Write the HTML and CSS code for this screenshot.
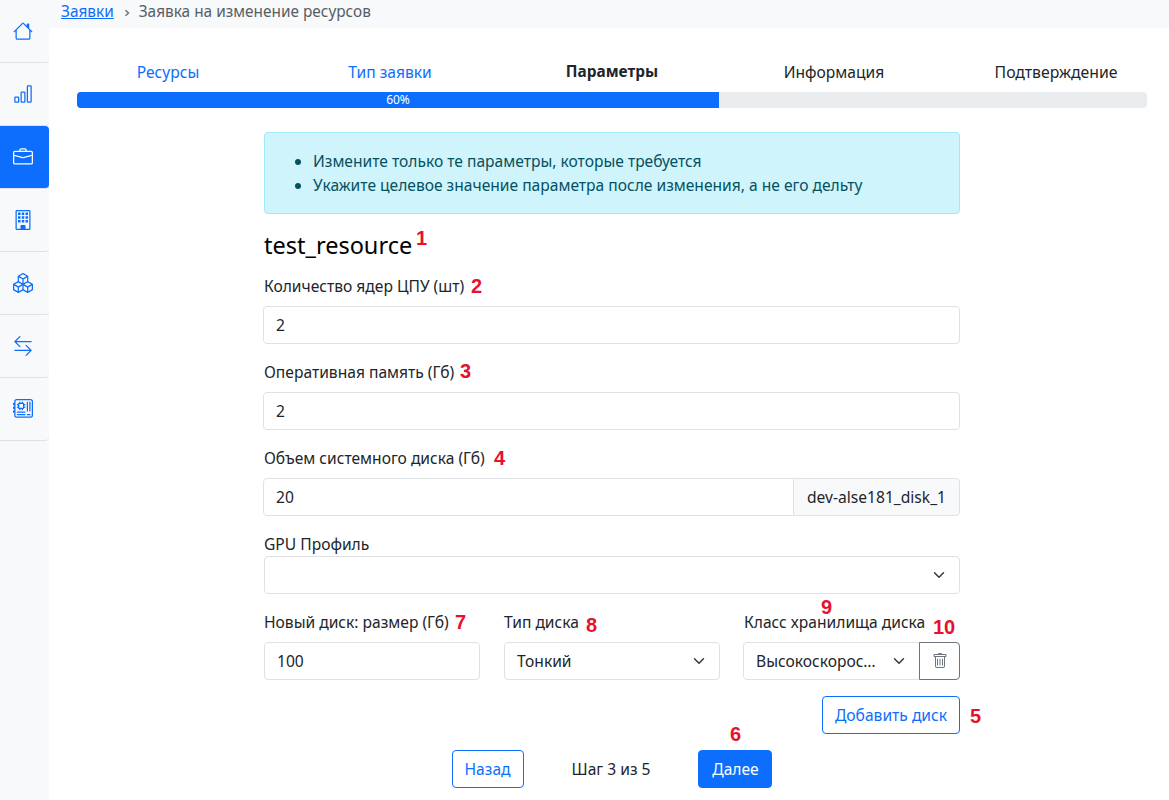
FILE: index.html
```html
<!DOCTYPE html>
<html lang="ru">
<head>
<meta charset="utf-8">
<title>Заявка на изменение ресурсов</title>
<link rel="stylesheet" href="styles.css">
</head>
<body>
<div class="app">
  <nav class="sidebar">
    <a class="nav-item"><svg class="icon" viewBox="0 0 16 16"><path d="M8.707 1.5a1 1 0 0 0-1.414 0L.646 8.146a.5.5 0 0 0 .708.708L2 8.207V13.5A1.5 1.5 0 0 0 3.5 15h9a1.5 1.5 0 0 0 1.5-1.5V8.207l.646.647a.5.5 0 0 0 .708-.708L13 5.793V2.5a.5.5 0 0 0-.5-.5h-1a.5.5 0 0 0-.5.5v1.293zM13 7.207V13.5a.5.5 0 0 1-.5.5h-9a.5.5 0 0 1-.5-.5V7.207l5-5z"/></svg></a>
    <a class="nav-item"><svg class="icon" viewBox="0 0 16 16"><path d="M4 11H2v3h2zm5-4H7v7h2zm5-5v12h-2V2zm-2-1a1 1 0 0 0-1 1v12a1 1 0 0 0 1 1h2a1 1 0 0 0 1-1V2a1 1 0 0 0-1-1zM6 7a1 1 0 0 1 1-1h2a1 1 0 0 1 1 1v7a1 1 0 0 1-1 1H7a1 1 0 0 1-1-1zm-5 4a1 1 0 0 1 1-1h2a1 1 0 0 1 1 1v3a1 1 0 0 1-1 1H2a1 1 0 0 1-1-1z"/></svg></a>
    <a class="nav-item active"><svg class="icon" viewBox="0 0 16 16"><path d="M6.5 1A1.5 1.5 0 0 0 5 2.5V3H1.5A1.5 1.5 0 0 0 0 4.5v8A1.5 1.5 0 0 0 1.5 14h13a1.5 1.5 0 0 0 1.5-1.5v-8A1.5 1.5 0 0 0 14.5 3H11v-.5A1.5 1.5 0 0 0 9.5 1zm0 1h3a.5.5 0 0 1 .5.5V3H6v-.5a.5.5 0 0 1 .5-.5m1.886 6.914L15 7.151V12.5a.5.5 0 0 1-.5.5h-13a.5.5 0 0 1-.5-.5V7.15l6.614 1.764a1.5 1.5 0 0 0 .772 0M1.5 4h13a.5.5 0 0 1 .5.5v1.616L8.129 7.948a.5.5 0 0 1-.258 0L1 6.116V4.5a.5.5 0 0 1 .5-.5"/></svg></a>
    <a class="nav-item"><svg class="icon" viewBox="0 0 16 16"><path d="M2 1a1 1 0 0 1 1-1h10a1 1 0 0 1 1 1v14a1 1 0 0 1-1 1H3a1 1 0 0 1-1-1zm11 0H3v14h3v-2.5a.5.5 0 0 1 .5-.5h3a.5.5 0 0 1 .5.5V15h3z"/><path d="M4 2h2v2H4zm3 0h2v2H7zm3 0h2v2h-2zM4 5h2v2H4zm3 0h2v2H7zm3 0h2v2h-2zM4 8h2v2H4zm3 0h2v2H7zm3 0h2v2h-2z"/></svg></a>
    <a class="nav-item"><svg class="icon" viewBox="0 0 16 16"><path d="M7.752.066a.5.5 0 0 1 .496 0l3.75 2.143a.5.5 0 0 1 .252.434v3.995l3.498 2A.5.5 0 0 1 16 9.07v4.286a.5.5 0 0 1-.252.434l-3.75 2.143a.5.5 0 0 1-.496 0l-3.502-2-3.502 2.001a.5.5 0 0 1-.496 0l-3.75-2.143A.5.5 0 0 1 0 13.357V9.071a.5.5 0 0 1 .252-.434L3.75 6.638V2.643a.5.5 0 0 1 .252-.434zM4.250 7.504 1.508 9.071l2.742 1.567 2.742-1.567zM7.500 9.933l-2.750 1.571v3.134l2.750-1.571zm1 3.134 2.750 1.571v-3.134L8.500 9.933zm.508-3.996 2.742 1.567 2.742-1.567-2.742-1.567zm2.242-2.433V3.504L8.500 5.076V8.210zM7.500 8.210V5.076L4.750 3.504v3.134zM5.258 2.643 8 4.210l2.742-1.567L8 1.076zM15 9.933l-2.750 1.571v3.134L15 13.067zM3.750 14.638v-3.134L1 9.933v3.134z"/></svg></a>
    <a class="nav-item"><svg class="icon" viewBox="0 0 16 16"><path fill-rule="evenodd" d="M1 11.5a.5.5 0 0 0 .5.5h11.793l-3.147 3.146a.5.5 0 0 0 .708.708l4-4a.5.5 0 0 0 0-.708l-4-4a.5.5 0 0 0-.708.708L13.293 11H1.5a.5.5 0 0 0-.5.5m14-7a.5.5 0 0 1-.5.5H2.707l3.147 3.146a.5.5 0 1 1-.708.708l-4-4a.5.5 0 0 1 0-.708l4-4a.5.5 0 1 1 .708.708L2.707 4H14.5a.5.5 0 0 1 .5.5"/></svg></a>
    <a class="nav-item"><svg class="icon" viewBox="0 0 16 16"><path d="M11.5 2a.5.5 0 0 1 .5.5v7a.5.5 0 0 1-1 0v-7a.5.5 0 0 1 .5-.5m2 0a.5.5 0 0 1 .5.5v7a.5.5 0 0 1-1 0v-7a.5.5 0 0 1 .5-.5m-10 8a.5.5 0 0 0 0 1h6a.5.5 0 0 0 0-1zm0 2a.5.5 0 0 0 0 1h6a.5.5 0 0 0 0-1zM5 3a1 1 0 0 0-1 1h-.5a.5.5 0 0 0 0 1H4v1h-.5a.5.5 0 0 0 0 1H4a1 1 0 0 0 1 1v.5a.5.5 0 0 0 1 0V8h1v.5a.5.5 0 0 0 1 0V8a1 1 0 0 0 1-1h.5a.5.5 0 0 0 0-1H9V5h.5a.5.5 0 0 0 0-1H9a1 1 0 0 0-1-1v-.5a.5.5 0 0 0-1 0V3H6v-.5a.5.5 0 0 0-1 0zm0 1h3v3H5zm6.5 8a.5.5 0 0 0 0 1h2a.5.5 0 0 0 0-1z"/><path d="M1 2a2 2 0 0 1 2-2h11a2 2 0 0 1 2 2v11a2 2 0 0 1-2 2H3a2 2 0 0 1-2-2v-2H.5a.5.5 0 0 1-.5-.5v-1A.5.5 0 0 1 .5 9H1V8H.5a.5.5 0 0 1-.5-.5v-1A.5.5 0 0 1 .5 6H1V5H.5a.5.5 0 0 1-.5-.5v-1A.5.5 0 0 1 .5 3H1zm1 11a1 1 0 0 0 1 1h11a1 1 0 0 0 1-1V2a1 1 0 0 0-1-1H3a1 1 0 0 0-1 1z"/></svg></a>
  </nav>
  <main class="main">
    <div class="crumbs">
      <a class="crumb-link" href="#">Заявки</a>
      <svg class="crumb-sep" viewBox="0 0 16 16"><path d="M5 2.5 11 8l-6 5.500" fill="none" stroke="currentColor" stroke-width="3"/></svg>
      <span class="crumb-current">Заявка на изменение ресурсов</span>
    </div>
    <div class="content">
      <div class="steps">
        <a class="step done">Ресурсы</a>
        <a class="step done">Тип заявки</a>
        <span class="step current">Параметры</span>
        <span class="step">Информация</span>
        <span class="step">Подтверждение</span>
      </div>
      <div class="progress"><div class="progress-bar">60%</div></div>
      <form class="form">
        <div class="alert">
          <ul class="alert-list">
            <li>Измените только те параметры, которые требуется</li>
            <li>Укажите целевое значение параметра после изменения, а не его дельту</li>
          </ul>
        </div>
        <h2 class="title">test_resource</h2>
        <label class="label">Количество ядер ЦПУ (шт)</label>
        <input class="control block wide" value="2">
        <label class="label">Оперативная память (Гб)</label>
        <input class="control block wide" value="2">
        <label class="label">Объем системного диска (Гб)</label>
        <div class="group block">
          <input class="control group-input" value="20">
          <span class="group-text">dev-alse181_disk_1</span>
        </div>
        <label class="label tight">GPU Профиль</label>
        <select class="control select block"><option></option></select>
        <div class="disk-row">
          <div>
            <label class="label">Новый диск: размер (Гб)</label>
            <input class="control" value="100">
          </div>
          <div>
            <label class="label">Тип диска</label>
            <select class="control select"><option>Тонкий</option></select>
          </div>
          <div>
            <label class="label">Класс хранилища диска</label>
            <div class="group shift-group">
              <select class="control select group-select"><option>Высокоскоростной</option></select>
              <button class="trash" type="button"><svg viewBox="0 0 16 16"><path d="M5.500 5.500A.5.5 0 0 1 6 6v6a.5.5 0 0 1-1 0V6a.5.5 0 0 1 .5-.5m2.500 0a.5.5 0 0 1 .5.5v6a.5.5 0 0 1-1 0V6a.5.5 0 0 1 .5-.5m3 .5a.5.5 0 0 0-1 0v6a.5.5 0 0 0 1 0z"/><path d="M14.500 3a1 1 0 0 1-1 1H13v9a2 2 0 0 1-2 2H5a2 2 0 0 1-2-2V4h-.5a1 1 0 0 1-1-1V2a1 1 0 0 1 1-1H6a1 1 0 0 1 1-1h2a1 1 0 0 1 1 1h3.500a1 1 0 0 1 1 1zM4.118 4 4 4.059V13a1 1 0 0 0 1 1h6a1 1 0 0 0 1-1V4.059L11.882 4zM2.500 3h11V2h-11z"/></svg></button>
            </div>
          </div>
        </div>
        <div class="add-row"><button class="btn outline" type="button">Добавить диск</button></div>
        <div class="footer-row">
          <button class="btn outline" type="button">Назад</button>
          <span class="step-count">Шаг 3 из 5</span>
          <button class="btn primary" type="button">Далее</button>
        </div>
        <span class="mark m1">1</span>
        <span class="mark m2">2</span>
        <span class="mark m3">3</span>
        <span class="mark m4">4</span>
        <span class="mark m5">5</span>
        <span class="mark m6">6</span>
        <span class="mark m7">7</span>
        <span class="mark m8">8</span>
        <span class="mark m9">9</span>
        <span class="mark m10">10</span>
      </form>
    </div>
  </main>
</div>
</body>
</html>
```

FILE: styles.css
```css
* { box-sizing: border-box; }
html, body { margin: 0; height: 100%; }
body {
  overflow: hidden;
  background: #fff;
  color: #212529;
  font-family: "Noto Sans", sans-serif;
  font-size: 15.6px;
  line-height: 24px;
}
.app { display: flex; height: 800px; }
.sidebar { width: 49px; flex: none; background: #f8f9fa; }
.nav-item {
  display: flex;
  align-items: center;
  justify-content: center;
  height: 63px;
  padding-right: 3px;
  border-bottom: 1px solid #dee2e6;
  border-bottom-right-radius: 4px;
  color: #0d6efd;
}
.nav-item.active { background: #0d6efd; color: #fff; border-radius: 0 4px 4px 0; }
.icon { width: 20px; height: 20px; fill: currentColor; }
.main { flex: 1; min-width: 0; }
.crumbs {
  display: flex;
  align-items: center;
  height: 28px;
  padding: 0 12px 4px;
  background: #f8f9fa;
  font-size: 15.4px;
}
.crumb-link { color: #0d6efd; }
.crumb-sep { width: 8px; height: 8px; margin: 2px 8px 0 9px; color: #6c757d; }
.crumb-current { color: #565e64; }
.content { padding: 32px 22px 0 28px; }
.steps { display: grid; grid-template-columns: repeat(5, 222px); margin: 0 -20px 8px; }
.step { text-align: center; font-size: 15.6px; line-height: 24px; color: #212529; }
.step.done { color: #0d6efd; }
.step:last-child { font-size: 15.8px; }
.step.current { font-size: 15.4px; font-weight: 700; }
.progress { height: 16px; background: #e9ecef; border-radius: 4px; overflow: hidden; }
.progress-bar {
  width: 60%;
  height: 100%;
  background: #0d6efd;
  color: #fff;
  font-size: 12px;
  line-height: 16px;
  text-align: center;
}
.form { position: relative; width: 696px; margin: 24px 0 0 187px; }
.alert {
  height: 82px;
  padding: 16px;
  background: #cff4fc;
  border: 1px solid #9eeaf9;
  border-radius: 4px;
  color: #055160;
}
.alert-list { margin: 0; padding-left: 32px; }
.title {
  margin: 15px 0 13px;
  font-size: 23.5px;
  line-height: 32px;
  font-weight: 400;
  color: #000;
}
.label { display: block; margin-bottom: 8px; line-height: 24px; }
.label.tight { margin-bottom: 0; }
.control {
  display: block;
  width: 100%;
  height: 38px;
  padding: 6px 12px;
  border: 1px solid #dee2e6;
  border-radius: 4px;
  background: #fff;
  color: #212529;
  font: 15.6px/24px "Noto Sans", sans-serif;
}
.block { margin-bottom: 16px; }
.wide { width: 697px; margin-left: -1px; }
.select {
  appearance: none;
  padding-right: 36px;
  text-overflow: ellipsis;
  background-image: url("data:image/svg+xml,%3csvg xmlns='http://www.w3.org/2000/svg' viewBox='0 0 16 16'%3e%3cpath fill='none' stroke='%23343a40' stroke-linecap='round' stroke-linejoin='round' stroke-width='2' d='m2 5 6 6 6-6'/%3e%3c/svg%3e");
  background-repeat: no-repeat;
  background-position: right 12px center;
  background-size: 16px 12px;
}
.group { display: flex; }
.group-input { flex: 1; min-width: 0; border-radius: 4px 0 0 4px; margin-left: -1px; }
.group-text {
  display: flex;
  align-items: center;
  height: 38px;
  padding: 0 13px;
  margin-left: -1px;
  background: #f8f9fa;
  border: 1px solid #dee2e6;
  border-radius: 0 4px 4px 0;
  white-space: nowrap;
}
.disk-row { display: grid; grid-template-columns: repeat(3, 216px); column-gap: 24px; }
.shift-group { margin-left: -1px; }
.group-select { flex: 1; min-width: 0; padding-right: 38px; border-radius: 4px 0 0 4px; }
.trash {
  flex: none;
  width: 41px;
  height: 38px;
  margin-left: -1px;
  padding: 0;
  display: flex;
  align-items: center;
  justify-content: center;
  background: #fff;
  border: 1px solid #6c757d;
  border-radius: 0 4px 4px 0;
  color: #6c757d;
}
.trash svg { width: 16px; height: 16px; fill: currentColor; }
.add-row { display: flex; justify-content: flex-end; margin-top: 16px; }
.btn {
  height: 38px;
  padding: 0 12px;
  border-radius: 4px;
  font: 15.6px/24px "Noto Sans", sans-serif;
  border: 1px solid #0d6efd;
}
.outline { background: #fff; color: #0d6efd; }
.primary { width: 74px; padding: 0; background: #0d6efd; color: #fff; }
.footer-row { display: flex; align-items: center; justify-content: center; margin-top: 16px; }
.step-count { margin: 0 48px; }
.mark {
  position: absolute;
  color: #e8112d;
  font-family: "Liberation Sans", sans-serif;
  font-weight: 700;
  font-size: 20px;
  line-height: 20px;
}
.m1 { left: 152px; top: 96px; }
.m2 { left: 207px; top: 144px; }
.m3 { left: 196px; top: 229px; }
.m4 { left: 230px; top: 316px; }
.m5 { left: 706px; top: 574px; }
.m6 { left: 466px; top: 592px; }
.m7 { left: 191px; top: 480px; }
.m8 { left: 322px; top: 483px; }
.m9 { left: 557px; top: 465px; }
.m10 { left: 669px; top: 485px; }
```
